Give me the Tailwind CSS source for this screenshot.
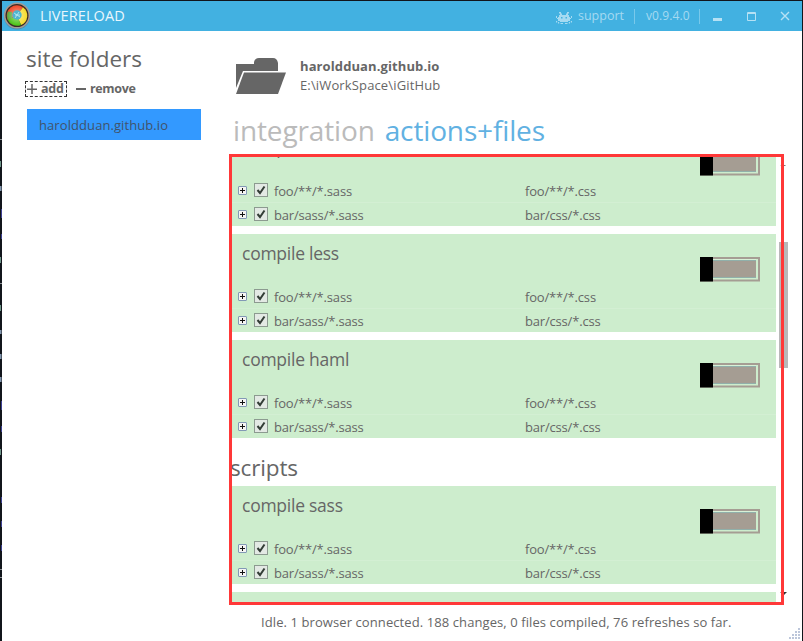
<!DOCTYPE html>
<html lang="en">
<head>
<meta charset="utf-8">
<title>LiveReload</title>
<script src="https://cdn.jsdelivr.net/npm/@tailwindcss/browser@4"></script>
</head>
<body class="h-[641px] w-[803px] overflow-hidden bg-[#11151b] pt-px pr-px pl-0.5 font-['Open_Sans','Noto_Sans',sans-serif] text-[13px] leading-6 text-[#666]">
<svg class="absolute top-0 left-0" width="2" height="641"><path d="M0 139.500h2M0 283.500h2M0 569.500h2M0 577.500h2" stroke="#8a8f94"/><path d="M.5 161v6M.5 257v6M.5 305v6M.5 449v6" stroke="#6f9689"/><path d="M.5 186v5M.5 330v4M.5 354v5M.5 377v5" stroke="#8195ad" stroke-width="2"/><path d="M1.500 209v9M1.500 234v5M1.500 401v9M1.500 426v6M1.500 497v6M1.500 521v6M1.500 545v6" stroke="#3c3f91"/></svg>
<div class="flex h-[640px] w-[800px] flex-col overflow-hidden bg-white">
  <header class="flex h-[30px] shrink-0 items-center bg-[#42b1e1] text-[#a5daf1]">
    <svg class="ml-px shrink-0" width="28" height="30" viewBox="0 0 28 30">
      <defs><radialGradient id="glow"><stop offset="0" stop-color="#fff" stop-opacity=".5"/><stop offset="1" stop-color="#fff" stop-opacity="0"/></radialGradient></defs>
      <circle cx="14" cy="15.500" r="13" fill="#477c91" opacity=".6"/>
      <circle cx="14" cy="14.500" r="12.300" fill="#3a2b25" stroke="#a39b94" stroke-width="1.600"/>
      <path d="M14 14.500 4.500 18.500A10.300 10.300 0 0 1 20 6.200z" fill="#ef4a28"/>
      <path d="M14 14.500 20 6.200A10.300 10.300 0 0 1 18 24z" fill="#f7dc2b"/>
      <path d="M14 14.500 18 24A10.300 10.300 0 0 1 4.500 18.500z" fill="#4cc316"/>
      <path d="M5 10.500A10 10 0 0 0 5 19L9 17 9 11z" fill="#59a83a"/>
      <circle cx="14" cy="14.500" r="10" fill="url(#glow)"/>
      <circle cx="14" cy="14" r="4.700" fill="#4fb4cf"/>
      <path d="m11 12 6 4m-5 1 4-6m-4 3h5" stroke="#b6e6ef" stroke-width=".9"/>
    </svg>
    <span class="ml-[9px] w-[515px] text-[14.5px] tracking-[0.1px] text-[#e9f7fd]">LIVERELOAD</span>
    <svg class="mt-[3px] shrink-0" width="18" height="12" viewBox="0 0 18 12" fill="#a5daf1">
      <path d="M4 0h2v1.500h1V3h4V1.500h1V0h2v1.500h-1V3h1v2h1v4h-2v1H5V9H3V5h1V3h1V1.500H4z"/>
      <path d="M1 4h1v2H1zM2 6h1v1H2zM16 4h1v2h-1zM15 6h1v1h-1zM1 9h1.200v1.500H1zM15.800 9H17v1.500h-1.200zM3 10h1.200v1.500H3zM13.800 10H15v1.500h-1.200zM5.500 11h2.500v1H5.500zM10 11h2.500v1H10z"/>
      <path d="M6 5h1.500v1.500H6zM10.500 5H12v1.500h-1.500z" fill="#42b1e1"/>
    </svg>
    <span class="ml-1 w-[57px] pl-px text-[12.500px]">support</span>
    <span class="h-[15px] w-px bg-[#79c9eb]"></span>
    <span class="ml-[11px] w-[53px] text-[12px] tracking-[0.1px]">v0.9.4.0</span>
    <span class="h-[15px] w-px bg-[#79c9eb]"></span>
    <svg class="ml-[13px]" width="78" height="30" viewBox="0 0 78 30" fill="none" stroke="#b5e1f4"><path d="M0 18.500h9" stroke-width="3"/><path d="M34.500 11.500h8v8h-8zM34 12.500h9"/><path d="m68 11 8 8m0-8-8 8" stroke-width="1.400"/></svg>
  </header>
  <main class="flex min-h-0 flex-1">
    <aside class="w-[227px] shrink-0 pt-3 pl-6">
      <h1 class="h-8 text-[22.5px] leading-8 whitespace-nowrap">site folders</h1>
      <div class="mt-[5px] flex h-[17px] items-center font-bold">
        <button class="flex h-[14px] w-[40px] items-center outline-1 -outline-offset-0 outline-dashed outline-[#333] leading-[14px]"><svg class="mr-1 ml-px shrink-0" width="10" height="11" viewBox="0 0 10 11"><path d="M5 1v10M0 6.250h10" stroke="#666" stroke-width="1.500"/></svg><span class="text-[12.500px] tracking-[-0.2px]">add</span></button>
        <button class="ml-2.5 flex items-center leading-[15px]"><span class="mt-px mr-1 h-[1.5px] w-2.5 bg-[#666]"></span><span class="text-[12.500px] tracking-[-0.35px]">remove</span></button>
      </div>
      <div class="mt-3 ml-px h-[31px] w-[174px] bg-[#3399ff] pl-3 leading-[32px] tracking-[0.08px] text-[#41536b]">haroldduan.github.io</div>
    </aside>
    <section class="flex w-[573px] flex-col">
      <div class="flex h-[80px] pt-[26px] pl-[7px]">
        <svg class="shrink-0" width="50" height="38" viewBox="0 0 50 38" fill="#666"><path d="M0 7h18V5q1-4 5-4h14q4 0 5 5v8H7L0 31z"/><path d="M8 15.500h42L42 37H0z"/></svg>
        <div class="ml-[14px] leading-[19px]"><p class="font-bold tracking-[0.1px]">haroldduan.github.io</p><p class="tracking-[0.14px]">E:\iWorkSpace\iGitHub</p></div>
      </div>
      <nav class="flex h-[43px] items-start gap-[10px] pl-1 text-[28px] leading-[38px] tracking-[-0.14px] whitespace-nowrap"><span class="text-[#bbb]">integration</span><span class="text-[#61b1e2]">actions+files</span></nav>
      <div class="relative h-[451px] w-[555px]">
        <span class="absolute top-[88px] left-[550px] h-[126px] w-[9px] bg-[#b8b8b8]"></span>
        <svg class="absolute top-0 left-[550px]" width="9" height="451"><path d="M1 12h6l-1-1H3z" fill="#777"/><path d="M1 438h7l-3 3z" fill="#333"/></svg>
        <div id="list" class="absolute inset-0 flex flex-col justify-start overflow-hidden border-[3px] border-[#ff3838] pr-[5px]"></div>
        <h2 class="absolute top-[298px] left-px text-[22.500px] leading-8 tracking-[-0.15px]">scripts</h2>
        <span class="absolute top-0 left-0 h-[451px] w-[3px] bg-[#ff3838]"></span>
      </div>
      <footer class="pt-[5px] pl-8 tracking-[0.09px] whitespace-nowrap">Idle. 1 browser connected. 188 changes, 0 files compiled, 76 refreshes so far.</footer>
    </section>
  </main>
  <svg class="absolute top-[627px] left-[788px]" width="13" height="13" fill="#bcc6da"><path d="M10 1h2v2h-2zM7 4h2v2H7zM10 4h2v2h-2zM4 7h2v2H4zM7 7h2v2H7zM10 7h2v2h-2zM1 10h2v2H1zM4 10h2v2H4zM7 10h2v2H7zM10 10h2v2h-2z"/></svg>
</div>
<template id="row">
  <div class="flex h-6 items-center border-t border-[#d3efd3] pl-1.5 tracking-[-0.18px]">
    <svg class="shrink-0" width="9" height="9"><rect x=".5" y=".5" width="8" height="8" rx=".5" fill="#f5f5f3" stroke="#8299b5"/><path d="M2 4.500h5M4.500 2v5" stroke="#111"/></svg>
    <svg class="mr-1.5 mb-px ml-[7px] shrink-0" width="14" height="14"><rect x=".5" y=".5" width="13" height="13" fill="#e3e9e4" stroke="#8c9a90"/><path d="m3.500 7 2.500 3 4.500-6.500" fill="none" stroke="#333d36" stroke-width="2"/></svg>
    <span class="w-[251px]" data-from></span><span data-to></span>
  </div>
</template>
<template id="card">
  <article class="mb-2 h-[98px] shrink-0 bg-[#cdedcd]">
    <div class="flex h-[50px] justify-between pr-4 pl-2.5">
      <h3 class="pt-1.5 text-[17.500px] leading-[26px] tracking-[-0.25px]"></h3>
      <svg class="mt-[22px]" width="60" height="26"><rect x="1" y="2" width="58" height="22.500" fill="none" stroke="#a59d93" stroke-width="2"/><path d="M13 4h43" stroke="#e2f4e0"/><rect x="13" y="4" width="43" height="18" fill="#a59d93"/><path d="M13 4.500h43M13 21.500h43" stroke="#90b0aa"/><path d="M0 1h13v24.500H0z" fill="#000"/></svg>
    </div>
  </article>
</template>
<script>
const list = document.getElementById('list');
['compile sass', 'compile less', 'compile haml', 'compile sass'].forEach((name, i) => {
  const card = document.getElementById('card').content.firstElementChild.cloneNode(true);
  card.querySelector('h3').textContent = name;
  [['foo/**/*.sass', 'foo/**/*.css'], ['bar/sass/*.sass', 'bar/css/*.css']].forEach(([from, to], j) => {
    const row = document.getElementById('row').content.firstElementChild.cloneNode(true);
    row.querySelector('[data-from]').textContent = from;
    row.querySelector('[data-to]').textContent = to;
    if (j === 0) row.classList.replace('border-[#d3efd3]', 'border-transparent');
    card.append(row);
  });
  if (i === 0) card.classList.add('mt-[-29px]');
  if (i === 3) card.classList.add('mt-10');
  list.append(card);
});
const next = document.createElement('article');
next.className = 'h-[98px] shrink-0 bg-[#cdedcd]';
list.append(next);
</script>
</body>
</html>
